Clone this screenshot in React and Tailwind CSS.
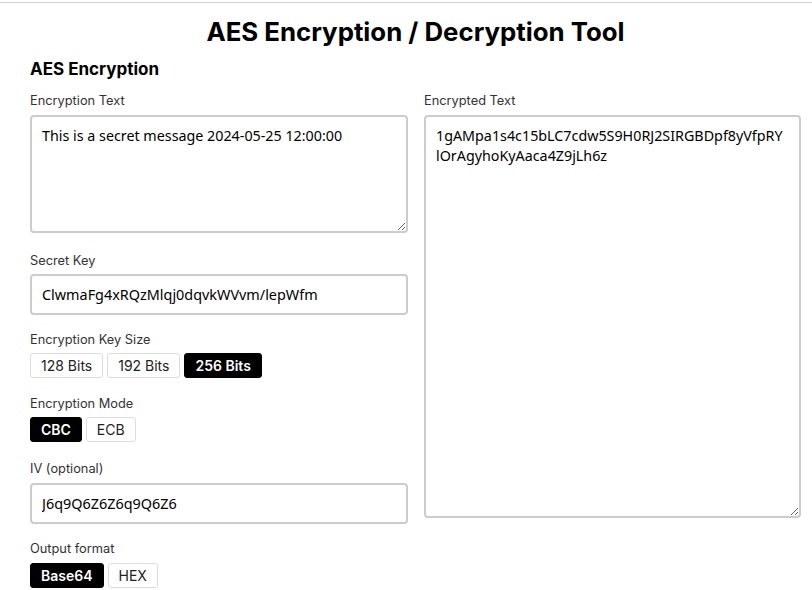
import React, { useState } from 'react';

const head = { fontFamily: 'Inter, "Open Sans", sans-serif' };
const body = { fontFamily: '"Noto Sans", "Open Sans", sans-serif' };

const Label = ({ children, className = 'mb-2' }) => (
  <div className={`text-[12.8px] leading-4 text-[#333] ${className}`} style={head}>{children}</div>
);

const Toggle = ({ options, value, onChange }) => (
  <div className="flex gap-1">
    {options.map(o => (
      <button
        key={o}
        onClick={() => onChange(o)}
        className={`h-[25px] px-[10px] rounded-[3px] border text-[14px] leading-none ${value === o ? 'bg-black text-white border-black font-semibold' : 'bg-white text-[#222] border-[#ddd]'}`}
        style={head}
      >
        {o}
      </button>
    ))}
  </div>
);

export default function App() {
  const [plain, setPlain] = useState('This is a secret message 2024-05-25 12:00:00');
  const [key, setKey] = useState('ClwmaFg4xRQzMlqj0dqvkWVvm/lepWfm');
  const [iv, setIv] = useState('J6q9Q6Z6Z6q9Q6Z6');
  const [size, setSize] = useState('256 Bits');
  const [mode, setMode] = useState('CBC');
  const [format, setFormat] = useState('Base64');

  return (
    <div className="w-[812px] h-[590px] bg-white overflow-hidden">
      <div className="mt-[2px] border-t border-[#d0d0d0]" />
      <div className="pl-[30px] pr-[11px]">
        <h1 className="text-center text-[25.8px] leading-8 font-bold text-black mt-[13px]" style={head}>
          AES Encryption / Decryption Tool
        </h1>
        <h2 className="text-[17px] leading-5 font-bold text-black mt-[11px] mb-[14px]" style={head}>AES Encryption</h2>
        <div className="grid grid-cols-[378px_377px] gap-[16px]">
          <div>
            <Label className="mb-[6px]">Encryption Text</Label>
            <textarea
              value={plain}
              onChange={e => setPlain(e.target.value)}
              className="block w-full h-[118px] border-2 border-[#ccc] rounded-[4px] px-[10px] py-[9px] text-[14.3px] leading-5 text-black outline-none"
              style={body}
            />

            <Label className="mt-[20px] mb-[5px]">Secret Key</Label>
            <input
              value={key}
              onChange={e => setKey(e.target.value)}
              className="block w-full h-[41px] border-2 border-[#ccc] rounded-[4px] px-[10px] text-[14.4px] text-black outline-none"
              style={body}
            />

            <Label className="mt-[17px] mb-[5px]">Encryption Key Size</Label>
            <Toggle options={['128 Bits', '192 Bits', '256 Bits']} value={size} onChange={setSize} />

            <Label className="mt-[18px] mb-[5px]">Encryption Mode</Label>
            <Toggle options={['CBC', 'ECB']} value={mode} onChange={setMode} />

            <Label className="mt-[19px] mb-[6px]">IV (optional)</Label>
            <input
              value={iv}
              onChange={e => setIv(e.target.value)}
              className="block w-full h-[41px] border-2 border-[#ccc] rounded-[4px] px-[10px] text-[14.4px] text-black outline-none"
              style={body}
            />

            <Label className="mt-[17px] mb-[6px]">Output format</Label>
            <Toggle options={['Base64', 'HEX']} value={format} onChange={setFormat} />
          </div>
          <div>
            <Label className="mb-[6px]">Encrypted Text</Label>
            <textarea
              readOnly
              value="1gAMpa1s4c15bLC7cdw5S9H0RJ2SIRGBDpf8yVfpRYlOrAgyhoKyAaca4Z9jLh6z"
              className="block w-full h-[403px] border-2 border-[#ccc] rounded-[4px] pl-[10px] pr-[16px] py-[9px] text-[14.3px] leading-5 text-black outline-none break-all"
              style={body}
            />
          </div>
        </div>
      </div>
    </div>
  );
}
